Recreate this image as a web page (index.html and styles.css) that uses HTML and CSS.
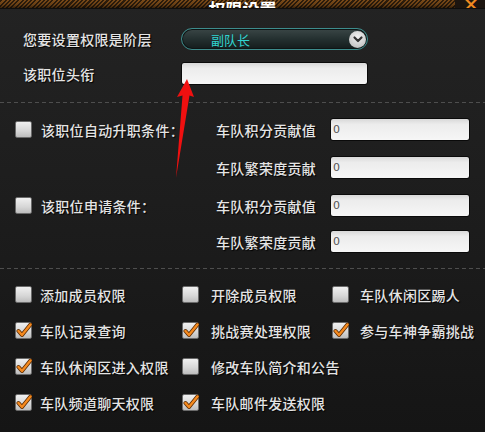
FILE: index.html
```html
<!DOCTYPE html>
<html lang="zh">
<head>
<meta charset="utf-8">
<link rel="stylesheet" href="styles.css">
</head>
<body>
<div class="win">
  <div class="titlebar">
    <span></span>
    <span class="title">权限设置</span>
    <span class="close">×</span>
  </div>

  <div class="top">
    <div class="frow">
      <span class="lbl">您要设置权限是阶层</span>
      <div class="select"><span class="sel-text">副队长</span><span class="sel-btn"><svg viewBox="0 0 16 16" width="16" height="16"><path d="M4.5 6.5 L8 10 L11.5 6.5" fill="none" stroke="#333" stroke-width="2.2" stroke-linecap="round" stroke-linejoin="round"/></svg></span></div>
    </div>
    <div class="frow">
      <span class="lbl">该职位头衔</span>
      <div class="input wide"></div>
    </div>
  </div>

  <div class="dash"></div>

  <div class="mid">
    <div class="group g1">
      <span class="cb"></span><span class="lbl">该职位自动升职条件：</span><span class="lbl">车队积分贡献值</span><div class="input">0</div>
      <span></span><span></span><span class="lbl">车队繁荣度贡献</span><div class="input">0</div>
    </div>
    <div class="group g2">
      <span class="cb"></span><span class="lbl">该职位申请条件：</span><span class="lbl">车队积分贡献值</span><div class="input">0</div>
      <span></span><span></span><span class="lbl">车队繁荣度贡献</span><div class="input">0</div>
    </div>
  </div>

  <div class="dash"></div>

  <div class="perms">
    <label class="perm"><span class="cb"></span><span class="lbl">添加成员权限</span></label>
    <label class="perm c2"><span class="cb"></span><span class="lbl">开除成员权限</span></label>
    <label class="perm c3"><span class="cb"></span><span class="lbl">车队休闲区踢人</span></label>

    <label class="perm"><span class="cb on"><svg viewBox="0 0 17 17" width="17" height="17"><path d="M3.5 9 L7 13 L15.5 2.5" fill="none" stroke="#5a2a00" stroke-width="4" stroke-linecap="round" stroke-linejoin="round"/><path d="M3.5 9 L7 13 L15.5 2.5" fill="none" stroke="#f58a1f" stroke-width="2.4" stroke-linecap="round" stroke-linejoin="round"/></svg></span><span class="lbl">车队记录查询</span></label>
    <label class="perm c2"><span class="cb on"><svg viewBox="0 0 17 17" width="17" height="17"><path d="M3.5 9 L7 13 L15.5 2.5" fill="none" stroke="#5a2a00" stroke-width="4" stroke-linecap="round" stroke-linejoin="round"/><path d="M3.5 9 L7 13 L15.5 2.5" fill="none" stroke="#f58a1f" stroke-width="2.4" stroke-linecap="round" stroke-linejoin="round"/></svg></span><span class="lbl">挑战赛处理权限</span></label>
    <label class="perm c3"><span class="cb on"><svg viewBox="0 0 17 17" width="17" height="17"><path d="M3.5 9 L7 13 L15.5 2.5" fill="none" stroke="#5a2a00" stroke-width="4" stroke-linecap="round" stroke-linejoin="round"/><path d="M3.5 9 L7 13 L15.5 2.5" fill="none" stroke="#f58a1f" stroke-width="2.4" stroke-linecap="round" stroke-linejoin="round"/></svg></span><span class="lbl">参与车神争霸挑战</span></label>

    <label class="perm"><span class="cb on"><svg viewBox="0 0 17 17" width="17" height="17"><path d="M3.5 9 L7 13 L15.5 2.5" fill="none" stroke="#5a2a00" stroke-width="4" stroke-linecap="round" stroke-linejoin="round"/><path d="M3.5 9 L7 13 L15.5 2.5" fill="none" stroke="#f58a1f" stroke-width="2.4" stroke-linecap="round" stroke-linejoin="round"/></svg></span><span class="lbl">车队休闲区进入权限</span></label>
    <label class="perm c2"><span class="cb"></span><span class="lbl">修改车队简介和公告</span></label>
    <span></span>

    <label class="perm"><span class="cb on"><svg viewBox="0 0 17 17" width="17" height="17"><path d="M3.5 9 L7 13 L15.5 2.5" fill="none" stroke="#5a2a00" stroke-width="4" stroke-linecap="round" stroke-linejoin="round"/><path d="M3.5 9 L7 13 L15.5 2.5" fill="none" stroke="#f58a1f" stroke-width="2.4" stroke-linecap="round" stroke-linejoin="round"/></svg></span><span class="lbl">车队频道聊天权限</span></label>
    <label class="perm c2"><span class="cb on"><svg viewBox="0 0 17 17" width="17" height="17"><path d="M3.5 9 L7 13 L15.5 2.5" fill="none" stroke="#5a2a00" stroke-width="4" stroke-linecap="round" stroke-linejoin="round"/><path d="M3.5 9 L7 13 L15.5 2.5" fill="none" stroke="#f58a1f" stroke-width="2.4" stroke-linecap="round" stroke-linejoin="round"/></svg></span><span class="lbl">车队邮件发送权限</span></label>
    <span></span>
  </div>

  <svg class="arrow" width="485" height="432" viewBox="0 0 485 432"><polygon points="187,79 194,97 189.5,95.5 176,178 182.5,95.5 177,97" fill="#f01010"/></svg>
</div>
</body>
</html>
```

FILE: styles.css
```css
html, body {
  margin: 0;
  padding: 0;
}
body {
  width: 485px;
  height: 432px;
  overflow: hidden;
  background: #1a1a1a;
  font-family: "Noto Sans CJK SC", "Noto Sans", sans-serif;
}
.win {
  position: relative;
  width: 485px;
  height: 432px;
  background: linear-gradient(to bottom, #232323 0%, #1e1e1e 40%, #151515 100%);
  overflow: hidden;
}
.titlebar {
  height: 8px;
  display: grid;
  grid-template-columns: 30px 1fr 30px;
  align-items: end;
  overflow: hidden;
  background:
    linear-gradient(to bottom, rgba(0,0,0,0) 0%, rgba(0,0,0,0.15) 60%, rgba(0,0,0,0.55) 100%),
    repeating-linear-gradient(-45deg, #7a4a18 0px, #7a4a18 1.5px, #2e1d0c 1.5px, #2e1d0c 3px);
  border-bottom: 1px solid #0e0e0e;
}
.title {
  justify-self: center;
  color: #fff;
  font-size: 17px;
  font-weight: bold;
  line-height: 17px;
  height: 17px;
  margin-bottom: -1px;
}
.close {
  align-self: stretch;
  background: #1c1510;
  color: #f08a20;
  font-size: 20px;
  font-weight: bold;
  line-height: 8px;
  text-align: right;
  padding-right: 4px;
  overflow: hidden;
}
.lbl {
  color: #e4e4e4;
  font-size: 14px;
  font-weight: 500;
  letter-spacing: 0.3px;
  text-shadow: 1px 1px 1px #000;
  white-space: nowrap;
}
.top {
  padding: 19px 0 17px 23px;
  display: flex;
  flex-direction: column;
  gap: 12px;
}
.frow {
  display: grid;
  grid-template-columns: 158px 187px;
  align-items: center;
}
.select {
  height: 20px;
  border: 1px solid #3d8c8c;
  border-radius: 11px;
  background: linear-gradient(to bottom, #3a4646 0%, #243030 50%, #141c1c 100%);
  box-shadow: inset 0 0 0 1px #0e1414;
  display: flex;
  align-items: center;
  justify-content: space-between;
  padding-left: 29px;
  padding-right: 1px;
}
.sel-text {
  color: #30d4d0;
  font-size: 13px;
}
.sel-btn {
  width: 17px;
  height: 17px;
  border-radius: 50%;
  background: radial-gradient(circle at 50% 35%, #f2f2f2 0%, #c8c8c8 70%, #9a9a9a 100%);
  display: flex;
  align-items: center;
  justify-content: center;
}
.input {
  height: 21px;
  border: 1px solid #0a0a0a;
  border-radius: 3px;
  background: linear-gradient(to bottom, #d8d8d8 0%, #ececec 25%, #f6f6f6 100%);
  color: #555;
  font-family: "DejaVu Sans", sans-serif;
  font-size: 11px;
  line-height: 21px;
  padding-left: 2px;
  box-sizing: content-box;
}
.dash {
  height: 1px;
  background: repeating-linear-gradient(to right, #4e4e4e 0px, #4e4e4e 4px, transparent 4px, transparent 7px);
}
.mid {
  padding: 15px 0 15px 15px;
  display: flex;
  flex-direction: column;
  gap: 15px;
}
.group {
  display: grid;
  grid-template-columns: 26px 175px 114px 140px;
  grid-auto-rows: 23px;
  align-items: center;
}
.g1 { row-gap: 15px; }
.g2 { row-gap: 13px; }
.cb {
  flex: none;
  width: 15px;
  height: 15px;
  border: 1px solid #6a6a6a;
  border-radius: 2px;
  background: linear-gradient(to bottom, #f0f0f0 0%, #d6d6d6 60%, #bdbdbd 100%);
  position: relative;
  display: block;
}
.cb svg {
  position: absolute;
  left: -1px;
  top: -1px;
}
.perms {
  padding: 17px 0 0 15px;
  display: grid;
  grid-template-columns: 167px 150px 1fr;
  grid-auto-rows: 17px;
  row-gap: 19px;
}
.perm {
  display: flex;
  align-items: center;
  gap: 8px;
  min-width: 0;
}
.perm.c2 { gap: 12px; }
.perm.c3 { gap: 11px; }
.arrow {
  position: absolute;
  left: 0;
  top: 0;
  pointer-events: none;
}
```
